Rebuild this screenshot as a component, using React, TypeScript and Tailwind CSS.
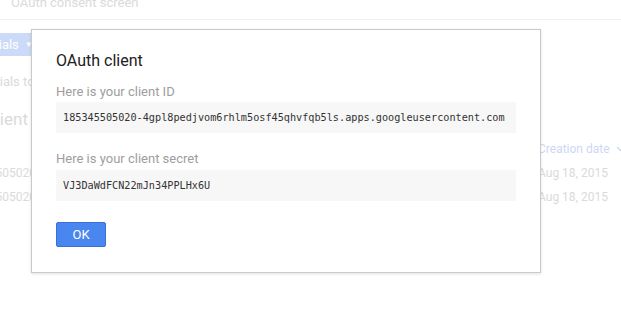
import React from 'react';

const rows = [
  { id: '185345505020-4gpl8pedjvom6rhlm5osf45qhvfqb5ls.apps.googleusercontent.com', date: 'Aug 18, 2015' },
  { id: '185345505020-k2v8t1jd0mqe9r3lbn6s7c4huf5ap0og.apps.googleusercontent.com', date: 'Aug 18, 2015' },
];

const Background: React.FC = () => (
  <div className="flex flex-col text-[13px] text-[#dadada]">
    <div className="h-[20px] border-b border-[#f2f2f2] pl-[11px]">
      <div className="-mt-[5px] leading-[16px]">OAuth consent screen</div>
    </div>
    <div className="mt-[13px] flex">
      <div className="-ml-[94px] flex h-[23px] items-center gap-[6px] rounded-[2px] bg-[#cbdaf8] pl-[8px] pr-[10px] text-white">
        <span className="whitespace-nowrap">Create credentials</span>
        <span className="text-[8px]">▼</span>
      </div>
    </div>
    <div className="mt-[18px] -ml-[85px] whitespace-nowrap leading-[16px]">Create credentials to access your enabled APIs.</div>
    <div className="mt-[19px] -ml-[92px] whitespace-nowrap text-[17px] leading-[20px]">OAuth 2.0 client IDs</div>
    <div className="mt-[12px] flex text-[12px] leading-[16px]">
      <div className="w-[538px] shrink-0" />
      <div className="flex items-center gap-[6px] whitespace-nowrap text-[#cdd7f3]">
        <span>Creation date</span>
        <svg width="9" height="6" viewBox="0 0 9 6" fill="none" stroke="#cdd7f3" strokeWidth="1.3">
          <path d="M1 1l3.5 3.5L8 1" />
        </svg>
      </div>
    </div>
    {rows.map((r, i) => (
      <div key={i} className="mt-[8px] flex text-[12px] leading-[16px]">
        <div className="w-[538px] shrink-0 overflow-hidden whitespace-nowrap">
          <span className="-ml-[45px] block">{r.id}</span>
        </div>
        <div className="whitespace-nowrap">{r.date}</div>
      </div>
    ))}
  </div>
);

const SecretField: React.FC<{ label: string; value: string; labelGap: string }> = ({ label, value, labelGap }) => (
  <>
    <div className={`${labelGap} text-[13px] leading-[16px] text-[#9e9e9e]`}>{label}</div>
    <div
      className="flex h-[31px] items-center bg-[#f7f7f7] px-[7px] text-[10.2px] text-[#333]"
      style={{ fontFamily: '"DejaVu Sans Mono", "Liberation Mono", monospace' }}
    >
      {value}
    </div>
  </>
);

export default function App() {
  return (
    <div
      className="relative h-[333px] w-[621px] overflow-hidden bg-white"
      style={{ fontFamily: 'Roboto, "Noto Sans", Arial, sans-serif' }}
    >
      <Background />

      <div className="absolute left-[31px] top-[29px] flex h-[244px] w-[510px] flex-col border border-[#cacaca] bg-white px-6 pt-[21px] shadow-[0_1px_3px_rgba(0,0,0,0.12)]">
        <div className="text-[16px] leading-[20px] text-[#212121]">OAuth client</div>
        <div className="mt-[13px]" />
        <SecretField
          label="Here is your client ID"
          value="185345505020-4gpl8pedjvom6rhlm5osf45qhvfqb5ls.apps.googleusercontent.com"
          labelGap="mb-[2px]"
        />
        <div className="mt-[18px]" />
        <SecretField label="Here is your client secret" value="VJ3DaWdFCN22mJn34PPLHx6U" labelGap="mb-[3px]" />
        <div className="mt-[21px]">
          <button className="h-[25px] w-[50px] rounded-[2px] border border-[#3a6fd8] bg-[#4a86f0] text-[13px] text-white">
            OK
          </button>
        </div>
      </div>
    </div>
  );
}
